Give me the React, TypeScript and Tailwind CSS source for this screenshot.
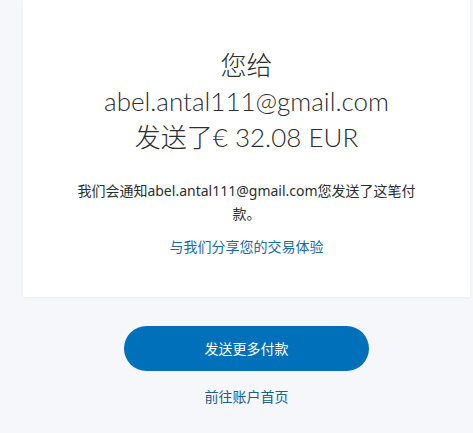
const font = {
  fontFamily: '"Noto Sans", "Noto Sans CJK SC", sans-serif',
};

const headFont = {
  fontFamily: 'Lato, "Noto Sans CJK SC", sans-serif',
};

export default function App() {
  return (
    <div className="min-h-[433px] w-[473px] bg-[#f5f7fa]" style={font}>
      <div className="ml-[23px] w-[447px] bg-white pt-[47px] pb-[39px] text-center shadow-[0_1px_3px_rgba(0,0,0,0.04)]">
        <h1 className="text-[26px] font-light text-[#2c2e2f]" style={headFont}>
          <div className="h-[36px] leading-[36px]">您给</div>
          <div className="h-[36px] leading-[36px]">abel.antal111@gmail.com</div>
          <div className="h-[36px] leading-[36px]">发送了€ 32.08 EUR</div>
        </h1>
        <p className="mx-auto mt-[24px] w-[356px] text-[14px] leading-[23px] text-[#2c2e2f]">
          我们会通知abel.antal111@gmail.com您发送了这笔付款。
        </p>
        <a className="mt-[10px] inline-block text-[14px] leading-[23px] text-[#1a6aa8]">
          与我们分享您的交易体验
        </a>
      </div>
      <div className="ml-[23px] flex w-[447px] flex-col items-center pt-[29px]">
        <button className="h-[45px] w-[245px] rounded-full bg-[#0070ba] text-[14px] text-white">
          发送更多付款
        </button>
        <a className="mt-[14px] text-[14px] leading-[24px] text-[#1a5e96]">前往账户首页</a>
      </div>
    </div>
  );
}
